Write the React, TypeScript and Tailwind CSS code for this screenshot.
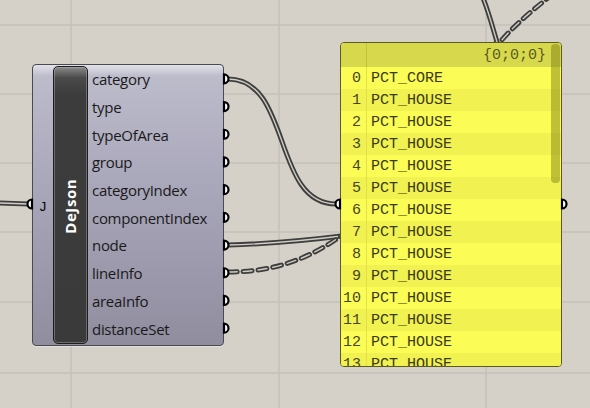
import React from 'react';

const outputs = [
  'category',
  'type',
  'typeOfArea',
  'group',
  'categoryIndex',
  'componentIndex',
  'node',
  'lineInfo',
  'areaInfo',
  'distanceSet',
];

const rows = [
  'PCT_CORE',
  'PCT_HOUSE',
  'PCT_HOUSE',
  'PCT_HOUSE',
  'PCT_HOUSE',
  'PCT_HOUSE',
  'PCT_HOUSE',
  'PCT_HOUSE',
  'PCT_HOUSE',
  'PCT_HOUSE',
  'PCT_HOUSE',
  'PCT_HOUSE',
  'PCT_HOUSE',
  'PCT_HOUSE',
];

// y centre of each output grip on the DeJson component
const gripY = outputs.map((_, i) => 65 + 27.7 * (i + 0.5));

const Wire = ({ d, dashed }: { d: string; dashed?: boolean }) => (
  <g fill="none">
    <path d={d} stroke="#3e3e3e" strokeWidth={5} strokeDasharray={dashed ? '9 6' : undefined} strokeLinecap={dashed ? 'round' : 'butt'} />
    <path d={d} stroke="#cfccc4" strokeWidth={1.4} strokeDasharray={dashed ? '9 6' : undefined} strokeLinecap={dashed ? 'round' : 'butt'} />
  </g>
);

const GripRight = ({ x, y }: { x: number; y: number }) => (
  <path d={`M${x},${y - 4.5} A4.5,4.5 0 0 1 ${x},${y + 4.5} Z`} fill="#fff" stroke="#000" strokeWidth={2.2} />
);

const GripLeft = ({ x, y }: { x: number; y: number }) => (
  <path d={`M${x},${y - 4.5} A4.5,4.5 0 0 0 ${x},${y + 4.5} Z`} fill="#fff" stroke="#000" strokeWidth={2.2} />
);

const DeJson: React.FC = () => (
  <div className="absolute left-[32px] top-[64px] w-[192px] h-[282px] rounded-[4px] border border-[#4a4a50] bg-[linear-gradient(to_bottom,#e2e2ea_0%,#bdbccb_4%,#aaa8bb_40%,#8f8d9e_100%)] flex shadow-[0_1px_0_rgba(255,255,255,0.35)]">
    <div className="w-[20px] flex items-center justify-center">
      <span className="text-[13px] text-black font-['Liberation_Sans',sans-serif] leading-none mt-[2px]">J</span>
    </div>
    <div className="my-[1px] w-[35px] rounded-[5px] border border-[#1c1c1c] bg-[linear-gradient(to_bottom,#8a8a8a_0%,#4a4a4a_4%,#3c3c3c_10%,#3a3a3a_100%)] shadow-[inset_0_0_0_1px_rgba(200,200,200,0.35)] flex items-center justify-center">
      <span className="-rotate-90 whitespace-nowrap text-white font-bold text-[15px] tracking-[0.6px] font-['Open_Sans',sans-serif] mt-[2px]">
        DeJson
      </span>
    </div>
    <div className="flex-1 pt-[1px] pl-[4px]">
      {outputs.map((o) => (
        <div key={o} className="h-[27.7px] flex items-center text-[15px] text-[#1a1a1a] font-['Open_Sans',sans-serif] leading-none tracking-[-0.3px]">
          {o}
        </div>
      ))}
    </div>
  </div>
);

const Panel: React.FC = () => (
  <div className="absolute left-[340px] top-[42px] w-[222px] h-[325px] rounded-[4px] border border-[#5c5c22] bg-[#fbfb55] overflow-hidden font-['Liberation_Mono',monospace] text-[15px] leading-none">
    <div className="h-[24px] flex bg-[#d8d84c]">
      <div className="w-[26px] border-r border-[#c2c240]" />
      <div className="flex-1 flex items-center justify-end pr-[15px] text-[#5a5a22]">{'{0;0;0}'}</div>
    </div>
    {rows.map((r, i) => (
      <div key={i} className={`h-[22px] flex ${i % 2 === 0 ? 'bg-[#fcfc56]' : 'bg-[#f1f151]'}`}>
        <div className="w-[26px] border-r border-[#e0e04a] flex items-center justify-end pr-[5px] text-[#45451a]">{i}</div>
        <div className="flex-1 flex items-center pl-[4px] text-[#3a3a14]">{r}</div>
      </div>
    ))}
    <div className="absolute right-[1px] top-[1px] w-[9px] h-[139px] rounded-[4px] bg-[rgba(110,110,10,0.42)]" />
  </div>
);

export default function App() {
  return (
    <div className="relative w-[590px] h-[408px] overflow-hidden bg-[#d5d1c9]">
      <svg className="absolute inset-0" width={590} height={408}>
        {[71, 279, 486].map((x) => (
          <line key={x} x1={x} y1={0} x2={x} y2={408} stroke="#c5c1b9" strokeWidth={1.5} />
        ))}
        {[25, 94, 163, 232, 302, 373].map((y) => (
          <line key={y} x1={0} y1={y} x2={590} y2={y} stroke="#c5c1b9" strokeWidth={1.5} />
        ))}
        <Wire d="M0,203 L28,204" />
        <Wire d="M228,79 C292,79 272,204 336,204" />
        <Wire d="M228,245 C270,244 310,240 350,235 L420,120 L497,42 C492,25 488,10 483,-2" />
        <Wire dashed d="M228,272 C282,272 318,254 352,228 L500,42 C515,25 530,12 548,-2" />
      </svg>
      <DeJson />
      <Panel />
      <svg className="absolute inset-0 pointer-events-none" width={590} height={408}>
        <GripLeft x={32} y={204} />
        {gripY.map((y, i) => (
          <GripRight key={i} x={224} y={y} />
        ))}
        <GripLeft x={340} y={204} />
        <GripRight x={562} y={204} />
      </svg>
    </div>
  );
}
